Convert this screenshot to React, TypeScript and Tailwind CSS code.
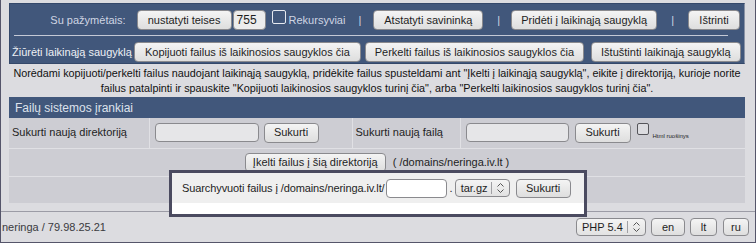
import React from "react";

// Small push button used everywhere on the page
function Btn({ w, children, h = "h-[20px]" }: { w: string; children: React.ReactNode; h?: string }) {
  return (
    <div
      className={`${w} ${h} shrink-0 flex items-center justify-center rounded-[4px] border border-[#8a8a8e] bg-gradient-to-b from-[#f4f4f4] to-[#dedede] text-[#1e1e1e] whitespace-nowrap`}
    >
      {children}
    </div>
  );
}

function UpDown() {
  return (
    <svg width="9" height="12" viewBox="0 0 9 12" fill="none" stroke="#555" strokeWidth="1">
      <path d="M1.5 4.5 L4.5 1.5 L7.5 4.5" />
      <path d="M1.5 7.5 L4.5 10.5 L7.5 7.5" />
    </svg>
  );
}

function Select({ w, label }: { w: string; label: string }) {
  return (
    <div
      className={`${w} h-[18px] shrink-0 flex items-center whitespace-nowrap rounded-[4px] border border-[#8a8a8e] bg-gradient-to-b from-[#f4f4f4] to-[#e2e2e2] text-[#1e1e1e]`}
    >
      <span className="pl-[5px] flex-1">{label}</span>
      <span className="w-px h-[12px] bg-[#a0a0a4]" />
      <span className="px-[4px] flex items-center">
        <UpDown />
      </span>
    </div>
  );
}

export default function App() {
  return (
    <div className="relative w-[756px] h-[243px] overflow-hidden bg-[#dcdce0] border-l border-r border-b border-[#55556a] font-['Liberation_Sans',Arial,sans-serif] text-[11px] leading-none">
      <div className="pl-[8px] pr-[10px] pt-[3px]">
        {/* Top blue toolbar */}
        <div className="h-[61px] bg-[#41577b] border border-[#34486a] border-r-[#8a93a6]">
          <div className="flex items-center justify-end pr-[4px] pt-[6px] text-[#cfd5e3]">
            <span className="mr-[11px]">Su pažymėtais:</span>
            <Btn w="w-[95px]">nustatyti teises</Btn>
            <div className="ml-px w-[33px] h-[20px] rounded-[4px] border border-[#8a8a8e] bg-[#ececec] text-[#1e1e1e] flex items-center pl-[3px] text-[12px]">
              755
            </div>
            <div className="ml-[6px] w-[14px] h-[14px] self-start rounded-[2px] border border-[#e6e9f0]" />
            <span className="ml-[3px]">Rekursyviai</span>
            <span className="ml-[13px] mr-[12px]">|</span>
            <Btn w="w-[110px]">Atstatyti savininką</Btn>
            <span className="ml-[14px] mr-[11px]">|</span>
            <Btn w="w-[146px]">Pridėti į laikinąją saugyklą</Btn>
            <span className="ml-[14px] mr-[14px]">|</span>
            <Btn w="w-[52px]">Ištrinti</Btn>
          </div>
          <div className="ml-[4px] mr-[16px] mt-[5px] h-px bg-[#c4c9d6]" />
          <div className="flex items-center pl-[2px] pt-[6px] text-[#eef0f5]">
            <span className="mr-[2px]">Žiūrėti laikinąją saugyklą</span>
            <Btn w="w-[227px]">Kopijuoti failus iš laikinosios saugyklos čia</Btn>
            <div className="ml-[4px]">
              <Btn w="w-[219px]">Perkelti failus iš laikinosios saugyklos čia</Btn>
            </div>
            <div className="ml-[7px]">
              <Btn w="w-[150px]">Ištuštinti laikinąją saugyklą</Btn>
            </div>
          </div>
        </div>

        {/* Help text */}
        <p className="h-[33px] pt-[2px] text-center text-[10.8px] leading-[15px] text-[#111] whitespace-nowrap">
          Norėdami kopijuoti/perkelti failus naudojant laikinąją saugyklą, pridėkite failus spusteldami ant "Įkelti į
          laikinąją saugyklą", eikite į direktoriją, kurioje norite
          <br />
          failus patalpinti ir spauskite "Kopijuoti laikinosios saugyklos turinį čia", arba "Perkelti laikinosios
          saugyklos turinį čia".
        </p>

        {/* Tools section */}
        <div className="h-[21px] bg-[#41577b] flex items-center pl-[6px] text-[12px] text-[#dde2ec]">
          Failų sistemos įrankiai
        </div>
        <table className="w-full border-collapse bg-[#cdcdd3] text-[#1e1e1e]">
          <tbody>
            <tr className="h-[30px]">
              <td className="w-[140px] pl-[3px] border-r border-b border-[#e0e0e4]">Sukurti naują direktoriją</td>
              <td className="w-[203px] border-r border-b border-[#e0e0e4]">
                <div className="flex items-center pl-[5px]">
                  <div className="w-[104px] h-[19px] rounded-[4px] border border-[#8a8a8e] bg-[#e6e6e8]" />
                  <div className="ml-[5px]">
                    <Btn w="w-[55px]">Sukurti</Btn>
                  </div>
                </div>
              </td>
              <td className="w-[108px] pl-[3px] border-r border-b border-[#e0e0e4]">Sukurti naują failą</td>
              <td className="border-b border-[#e0e0e4]">
                <div className="flex items-center pl-[5px]">
                  <div className="w-[103px] h-[19px] rounded-[4px] border border-[#8a8a8e] bg-[#e6e6e8]" />
                  <div className="ml-[6px]">
                    <Btn w="w-[56px]">Sukurti</Btn>
                  </div>
                  <div className="ml-[6px] self-start w-[12px] h-[12px] rounded-[2px] border border-[#55555a] bg-[#dcdce0]" />
                  <span className="ml-[4px] text-[6px] self-end mb-[4px]">Html ruošinys</span>
                </div>
              </td>
            </tr>
            <tr className="h-[28px]">
              <td colSpan={4} className="border-b border-[#e0e0e4]">
                <div className="flex items-center justify-center">
                  <Btn w="w-[141px]" h="h-[19px]">
                    Įkelti failus į šią direktoriją
                  </Btn>
                  <span className="ml-[7px]">( /domains/neringa.iv.lt )</span>
                </div>
              </td>
            </tr>
            <tr className="h-[27px]">
              <td colSpan={4} />
            </tr>
          </tbody>
        </table>
      </div>

      {/* Footer */}
      <div className="mt-[8px] border-t border-[#9c9ca6] h-[31px] flex items-center pl-[1px] pr-[6px] text-[#3a3a3e]">
        <span className="flex-1">neringa / 79.98.25.21</span>
        <Select w="w-[70px]" label="PHP 5.4" />
        <div className="ml-[5px]">
          <Btn w="w-[34px]" h="h-[18px]">
            en
          </Btn>
        </div>
        <div className="ml-[5px]">
          <Btn w="w-[27px]" h="h-[18px]">
            lt
          </Btn>
        </div>
        <div className="ml-[6px]">
          <Btn w="w-[26px]" h="h-[18px]">
            ru
          </Btn>
        </div>
      </div>

      {/* Archive popup */}
      <div className="absolute left-[168px] top-[170px] w-[418px] h-[47px] border-[3px] border-[#4b4b60] bg-white">
        <div className="h-[30px] bg-[#efefef] flex items-center pl-[10px] text-[#1e1e1e] whitespace-nowrap">
          <span className="tracking-[-0.1px]">Suarchyvuoti failus į /domains/neringa.iv.lt/</span>
          <div className="ml-px w-[61px] h-[19px] rounded-[4px] border border-[#8a8a8e] bg-white" />
          <span className="ml-[3px] mr-[2px]">.</span>
          <Select w="w-[55px]" label="tar.gz" />
          <div className="ml-[6px]">
            <Btn w="w-[55px]" h="h-[19px]">
              Sukurti
            </Btn>
          </div>
        </div>
      </div>
    </div>
  );
}
